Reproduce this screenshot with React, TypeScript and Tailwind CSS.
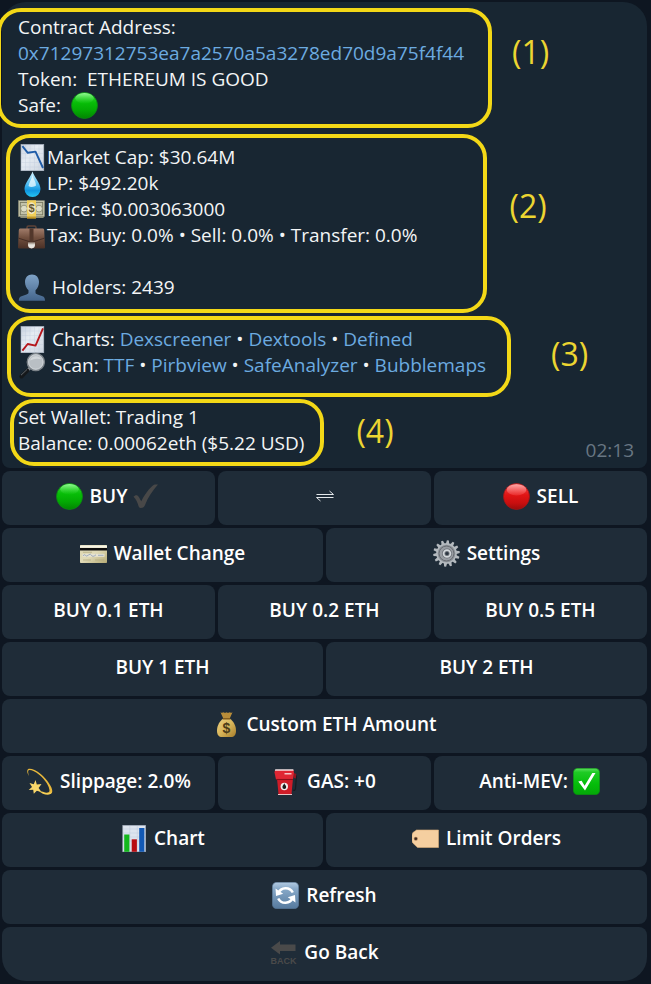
import type { ReactNode } from "react";

/* =============================================================
   Trading bot chat: token message + inline keyboard
   ============================================================= */

type IconProps = { children: ReactNode };

function Icon({ children }: IconProps) {
  return (
    <svg viewBox="0 0 27 27" className="mr-[2px] h-[27px] w-[27px] shrink-0" aria-hidden="true">
      {children}
    </svg>
  );
}

function GreenDot() {
  return (
    <Icon>
      <defs>
        <linearGradient id="green" x1="0" y1="0" x2="0" y2="1">
          <stop offset="0" stopColor="#3fd83f" />
          <stop offset="0.4" stopColor="#07bd07" />
          <stop offset="0.7" stopColor="#03a903" />
          <stop offset="1" stopColor="#028502" />
        </linearGradient>
        <linearGradient id="greenShine" x1="0" y1="0" x2="0" y2="1">
          <stop offset="0" stopColor="#9dff9d" stopOpacity="0.9" />
          <stop offset="1" stopColor="#2cd82c" stopOpacity="0.1" />
        </linearGradient>
      </defs>
      <circle cx="13.5" cy="13.5" r="13" fill="url(#green)" stroke="#0a8a12" strokeWidth="0.8" />
      <ellipse cx="13.5" cy="6.2" rx="9.2" ry="5.2" fill="url(#greenShine)" />
    </Icon>
  );
}

function RedDot() {
  return (
    <Icon>
      <defs>
        <linearGradient id="red" x1="0" y1="0" x2="0" y2="1">
          <stop offset="0" stopColor="#f05050" />
          <stop offset="0.45" stopColor="#e01414" />
          <stop offset="0.75" stopColor="#c90f0f" />
          <stop offset="1" stopColor="#9a0c0c" />
        </linearGradient>
        <linearGradient id="redShine" x1="0" y1="0" x2="0" y2="1">
          <stop offset="0" stopColor="#ffb3b3" stopOpacity="0.9" />
          <stop offset="1" stopColor="#ff6060" stopOpacity="0.3" />
        </linearGradient>
      </defs>
      <circle cx="13.5" cy="13.5" r="13" fill="url(#red)" stroke="#a31616" strokeWidth="0.8" />
      <ellipse cx="13.5" cy="6.8" rx="9.8" ry="5.6" fill="url(#redShine)" />
    </Icon>
  );
}

function ChartPaper({ children }: IconProps) {
  return (
    <Icon>
      <defs>
        <linearGradient id="paper" x1="0" y1="0" x2="1" y2="1">
          <stop offset="0" stopColor="#c9d2df" />
          <stop offset="0.4" stopColor="#e6ecf3" />
          <stop offset="1" stopColor="#cfd6e0" />
        </linearGradient>
      </defs>
      <rect x="3" y="0.4" width="22.8" height="26.4" fill="url(#paper)" stroke="#aab4c2" strokeWidth="0.6" />
      <path
        d="M7.500 .8v25.6M12 .8v25.6M16.500 .8v25.6M21 .8v25.6M3.300 5h22M3.300 9.500h22M3.300 14h22M3.300 18.500h22M3.300 23h22"
        stroke="#b9c6d8"
        strokeWidth="0.4"
        opacity="0.7"
      />
      {children}
    </Icon>
  );
}

function ChartDown() {
  return (
    <ChartPaper>
      <path d="M4.400 2.200L9.800 8.800L17.500 7.600L25 24" fill="none" stroke="#1f5ca8" strokeWidth="1.9" strokeLinejoin="round" />
    </ChartPaper>
  );
}

function ChartUp() {
  return (
    <ChartPaper>
      <path d="M4.400 24.600L9.700 18L17.500 19.600L25 2.400" fill="none" stroke="#b5161c" strokeWidth="1.9" strokeLinejoin="round" />
    </ChartPaper>
  );
}

function Drop() {
  return (
    <Icon>
      <defs>
        <linearGradient id="drop" x1="0" y1="0" x2="0" y2="1">
          <stop offset="0" stopColor="#d9f4ff" />
          <stop offset="0.45" stopColor="#59c0f2" />
          <stop offset="0.75" stopColor="#0f97e0" />
          <stop offset="1" stopColor="#27c6f2" />
        </linearGradient>
      </defs>
      <path d="M14.500 1.500C16 6.500 22.500 13 22.500 19a8 8 0 0 1-16 0C6.500 13 13 6.500 14.500 1.500z" fill="url(#drop)" />
      <path d="M14.500 5C14 9 11 12 10.500 16c2 1.500 6 1 7.500-.5C18 11.500 15.300 9 14.500 5z" fill="#f2fcff" opacity="0.75" />
    </Icon>
  );
}

function Banknotes() {
  return (
    <Icon>
      <path d="M2 19l.5 3h23l.7-3z" fill="#8f8f78" />
      <rect x="0.5" y="4.7" width="26" height="15.8" fill="#c4c4ab" stroke="#8b8b74" strokeWidth="0.6" />
      <rect x="2.3" y="6.4" width="22.4" height="12.4" fill="none" stroke="#77775f" strokeWidth="0.9" />
      <circle cx="6" cy="12.6" r="3.4" fill="#dcdcc6" stroke="#88886e" strokeWidth="0.8" />
      <circle cx="21" cy="12.6" r="3.4" fill="#dcdcc6" stroke="#88886e" strokeWidth="0.8" />
      <rect x="9" y="4.3" width="9" height="16.4" fill="#f1cf58" />
      <path d="M9 20.700h9v2H9z" fill="#c59a25" />
      <ellipse cx="13.5" cy="12.3" rx="4" ry="6" fill="#eee6c0" />
      <text x="13.5" y="16.3" textAnchor="middle" fontSize="11" fontWeight="700" fontFamily="Liberation Sans, sans-serif" fill="#66582f">
        $
      </text>
    </Icon>
  );
}

function Briefcase() {
  return (
    <Icon>
      <defs>
        <linearGradient id="case" x1="0" y1="0" x2="0" y2="1">
          <stop offset="0" stopColor="#a17c6a" />
          <stop offset="0.45" stopColor="#72503f" />
          <stop offset="1" stopColor="#4a3026" />
        </linearGradient>
      </defs>
      <path d="M9 7V5.500Q9 4 10.500 4h6Q18 4 18 5.500V7" fill="none" stroke="#5d4338" strokeWidth="1.5" />
      <path d="M2 6.500h23q1 0 1.200 1.500L27 25.500q0 1-1 1H1q-1 0-1-1L.8 8q.2-1.500 1.200-1.500z" fill="url(#case)" />
      <path d="M.6 16.200L11 19.500h5l10.400-3.300" fill="none" stroke="#412a22" strokeWidth="0.9" />
      <path d="M11.500 6.500h4v14h-4z" fill="#52372b" />
      <path d="M10 21h7v2q0 3-3.500 3.500Q10 26 10 23z" fill="#e9e5df" />
      <path d="M10 20.500h7v1.800h-7z" fill="#b5aaa0" />
    </Icon>
  );
}

function Person() {
  return (
    <Icon>
      <defs>
        <linearGradient id="person" x1="0" y1="0" x2="0" y2="1">
          <stop offset="0" stopColor="#7fa3c7" />
          <stop offset="1" stopColor="#44658c" />
        </linearGradient>
      </defs>
      <path
        d="M14 .5c4.300 0 7 3 7 7.500 0 3.500-1.500 6.500-3.500 8.200v2.300c0 1 .7 1.500 2 2l5 1.700c1.700.6 2.500 2 2.500 4.600H.8c0-2.600.9-4 2.700-4.600l5-1.700c1.300-.5 2-1 2-2v-2.300C8.500 14.500 7 11.500 7 8c0-4.500 2.700-7.500 7-7.500z"
        fill="url(#person)"
      />
    </Icon>
  );
}

function Magnifier() {
  return (
    <Icon>
      <path d="M12 16L9 19" stroke="#8a8f94" strokeWidth="3" />
      <path d="M9.300 18.700L3.500 24.500" stroke="#15181b" strokeWidth="4" strokeLinecap="round" />
      <path d="M9 17.500L3 23.200" stroke="#6a6f74" strokeWidth="0.9" />
      <circle cx="17.8" cy="10" r="8.6" fill="#abb2b8" stroke="#7c8389" strokeWidth="1.3" />
      <circle cx="17.8" cy="10" r="7.2" fill="#b9bfc4" stroke="#d8dcdf" strokeWidth="0.7" />
      <path d="M12 8.500a6.200 6.200 0 0 1 11.300-1.200Q17.500 5.500 12 8.500z" fill="#dde1e4" opacity="0.7" />
    </Icon>
  );
}

function HeavyCheck() {
  return (
    <Icon>
      <path
        d="M1.500 13.800C2.500 12.400 4.300 11.700 5.400 12.500c1.600 1.200 2.600 3.700 3.900 5.800C12.500 11.500 17.500 5 22 1.800c1.100-.5 2.900-.5 4-.2C20.500 7.500 16 14.500 12.800 22.500c-1 2-2.500 2.500-4.200 2.400-1 0-1.600-.7-2-1.700C5.500 19.700 4.200 16 1.500 13.800z"
        fill="#484848"
      />
    </Icon>
  );
}

function Swap() {
  return (
    <svg viewBox="0 0 18 12" className="h-3 w-[18px]" aria-hidden="true">
      <path d="M.5 4.500H17.500L13.500 1M17.500 7.500H.5L4.500 11" fill="none" stroke="#e4e8eb" strokeWidth="1" />
    </svg>
  );
}

function Card() {
  return (
    <Icon>
      <defs>
        <linearGradient id="card" x1="0" y1="0" x2="1" y2="1">
          <stop offset="0" stopColor="#ddd7b4" />
          <stop offset="0.5" stopColor="#e0dab6" />
          <stop offset="1" stopColor="#b5aa74" />
        </linearGradient>
      </defs>
      <rect x="0" y="5" width="27" height="18" rx="0.8" fill="url(#card)" />
      <path d="M0 5.600h27v2H0z" fill="#f6f4e6" />
      <path d="M0 8h27v2.500H0z" fill="#0d0d0d" />
      <path d="M2.500 13.800h22v3h-22z" fill="#e6e3d2" />
      <path d="M3 15.800q1.500-2 2.500-.4t3-.4 3 .3 4.500-.5M18 15.300h5.500" fill="none" stroke="#7f94b4" strokeWidth="0.7" />
      <path d="M3 12.300h9M3 20h8M15 20h9" stroke="#b0a77c" strokeWidth="0.7" />
    </Icon>
  );
}

function Gear() {
  const teeth = Array.from({ length: 14 }, (_, i) => (i * 360) / 14 + 6);
  return (
    <Icon>
      {teeth.map((deg) => (
        <path key={deg} d="M11.700 4.500L12.500.2h2l.8 4.300z" fill="#b4babf" transform={`rotate(${deg} 13.5 13.5)`} />
      ))}
      <circle cx="13.5" cy="13.5" r="9.6" fill="#8a9096" stroke="#b3b9be" strokeWidth="1.6" />
      <circle cx="13.5" cy="13.5" r="7.4" fill="#979ca2" stroke="#656a71" strokeWidth="0.9" />
      <circle cx="14" cy="13.5" r="5" fill="#6b7077" />
      <circle cx="14" cy="13.5" r="3.4" fill="#6b7077" stroke="#d3d8dc" strokeWidth="1.8" />
      <circle cx="14" cy="13.5" r="1.6" fill="#2a3540" />
    </Icon>
  );
}

function MoneyBag() {
  return (
    <Icon>
      <defs>
        <linearGradient id="bag" x1="0" y1="0" x2="1" y2="1">
          <stop offset="0" stopColor="#ecd182" />
          <stop offset="0.5" stopColor="#d9b65a" />
          <stop offset="1" stopColor="#a57c2a" />
        </linearGradient>
      </defs>
      <path d="M7.500 1.200q1.500 1 3 .1 1.500 1 3 0 1.500 1 3 0 1.400.9 3-.1L16.500 8h-6z" fill="#b98d39" />
      <path d="M10.300 7.500h6.400c3.500 2.500 6.300 7 6.300 12 0 4.800-2 6.500-5 6.500H9c-3 0-5-1.700-5-6.500 0-5 2.800-9.500 6.300-12z" fill="url(#bag)" />
      <path d="M9.800 7.800h7.400" stroke="#7d5518" strokeWidth="1.4" />
      <text x="13.5" y="22.3" textAnchor="middle" fontSize="14" fontWeight="700" fontFamily="Liberation Sans, sans-serif" fill="#4c3c18">
        $
      </text>
    </Icon>
  );
}

function Dizzy() {
  return (
    <Icon>
      <path
        d="M3 8C1.500 5.500 .5 2.500 2 1.200 4 0 9.500 1.800 15 6.200c6 5 11.500 13 11.300 17-.2 3.800-4.500 3.300-9.300 1 3.500 1 6.200.8 6.500-1.400C23.800 18.700 19 11.500 13.500 7 8.700 3 4 1.300 2.600 2.300 1.600 3.200 2.300 5.500 3 8z"
        fill="#e8b83c"
      />
      <path d="M9.500 12l1.300 4.600 4.700-.6-2.900 4 2.900 4-4.700-1.200-3 3-.6-4L2.700 22l3.300-3-2.500-4 4.300 1.200z" fill="#f9d76a" />
      <path d="M12.500 23l4.500.7c3 1.700 6.800 2 8.800-.2-.6 4-4.800 3.800-9 2.300z" fill="#f6cf55" />
    </Icon>
  );
}

function GasPump() {
  return (
    <Icon>
      <path d="M20 6q3.500 0 3.300 3.500l-.8 11q-.3 2.500-2.500 1.500" fill="none" stroke="#171b20" strokeWidth="1.2" />
      <path d="M20 4.500l3.300 1.500-.5 4.500-1.800-.5z" fill="#8e1520" />
      <path d="M4 10.500h16L18.500 26h-13z" fill="#cf1c28" />
      <path d="M2 2h18.500l.5 2.500-1 7H3l-1.500-7z" fill="#df2633" />
      <path d="M2.300 1.300h18l.3 1.500H1.900z" fill="#f2dfe0" />
      <path d="M11.500 5h7v1.500h-7z" fill="#f4c4c7" />
      <path d="M3 11.500h17" stroke="#8b0f19" strokeWidth="1.1" />
      <path d="M5 26h14v1H5z" fill="#e8c4c6" />
      <circle cx="11.3" cy="18.5" r="3.7" fill="#f1eded" />
      <path d="M11.300 15.300c.8 1.700 1.900 2.500 1.900 3.800a1.900 1.900 0 0 1-3.800 0c0-1.300 1.100-2.100 1.900-3.800z" fill="#1b1b1b" />
    </Icon>
  );
}

function CheckBox() {
  return (
    <Icon>
      <defs>
        <linearGradient id="box" x1="0" y1="0" x2="0" y2="1">
          <stop offset="0" stopColor="#5fe05f" />
          <stop offset="0.15" stopColor="#1fcb25" />
          <stop offset="0.6" stopColor="#05bd0a" />
          <stop offset="1" stopColor="#04a808" />
        </linearGradient>
      </defs>
      <rect x="0.3" y="0.3" width="26.4" height="26.4" rx="4.5" fill="url(#box)" stroke="#0a8f10" strokeWidth="0.6" />
      <path d="M5.300 13.500l3.300-.8 3 5L19.300 5h3.200L12 22.500z" fill="#fff" />
    </Icon>
  );
}

function BarChart() {
  return (
    <Icon>
      <rect x="2.8" y="0.4" width="22.8" height="26.4" fill="#dde4ee" stroke="#aab4c2" strokeWidth="0.6" />
      <path d="M3 4h22M3 8h22M3 12h22M3 16h22M9.800.8v26M17.300.8v26" stroke="#b9c6d8" strokeWidth="0.4" />
      <path d="M4.200 9.500h5.200v17.300H4.200z" fill="#14b81d" />
      <path d="M11.700 14.300h5.200v12.500h-5.200z" fill="#b80d12" />
      <path d="M19.200 3h5.200v23.800h-5.200z" fill="#1259b5" />
    </Icon>
  );
}

function Tag() {
  return (
    <Icon>
      <path d="M4.500 5H26.500V22.500H5.500L.8 18Q0 17 0 16V10Q0 8.500 1 7.500z" fill="#f5cfa0" stroke="#dcae79" strokeWidth="0.6" />
      <circle cx="3.8" cy="13.7" r="2" fill="#a97d57" />
      <circle cx="3.8" cy="13.7" r="1.3" fill="#3b2a20" />
    </Icon>
  );
}

function RefreshBox() {
  return (
    <Icon>
      <defs>
        <linearGradient id="refresh" x1="0" y1="0" x2="0" y2="1">
          <stop offset="0" stopColor="#b3cbe2" />
          <stop offset="0.25" stopColor="#88a9c8" />
          <stop offset="1" stopColor="#567a9e" />
        </linearGradient>
      </defs>
      <rect x="0.3" y="0.3" width="26.4" height="26.4" rx="4.5" fill="url(#refresh)" stroke="#587693" strokeWidth="0.6" />
      <path d="M6.300 11.200A8 8 0 0 1 20.800 10.500" fill="none" stroke="#fff" strokeWidth="2.5" />
      <path d="M20.700 15.800A8 8 0 0 1 6.200 16.500" fill="none" stroke="#fff" strokeWidth="2.5" />
      <path d="M3.500 6.500L4 14l7.200-2.200z" fill="#fff" />
      <path d="M23.500 20.500L23 13l-7.200 2.200z" fill="#fff" />
    </Icon>
  );
}

function BackArrow() {
  return (
    <Icon>
      <path d="M1 8.700L10 2v3.500h15.500v6.500H10v3.500z" fill="#4a4a4a" />
      <text
        x="13.5"
        y="25"
        textAnchor="middle"
        fontSize="9"
        fontWeight="700"
        fontFamily="Liberation Sans, sans-serif"
        fill="#4a4a4a"
      >
        BACK
      </text>
    </Icon>
  );
}

/* One line of message text */
function Line({ children }: { children?: ReactNode }) {
  return <div className="flex h-[26px] items-center whitespace-pre">{children}</div>;
}

function LinkList({ items }: { items: string[] }) {
  return (
    <span>
      {items.map((item, i) => (
        <span key={item}>
          {i > 0 && " • "}
          <a href={`#${item.toLowerCase()}`} className="text-[#6cabe0] hover:underline">
            {item}
          </a>
        </span>
      ))}
    </span>
  );
}

const frame = "rounded-[24px] border-4 border-[#f3d817]";
const note = "text-[32px] leading-8 text-[#ecd531]";

function Message() {
  return (
    <div className="rounded-t-[24px] rounded-b-lg bg-[#182632] pt-[6px] pb-[2px] text-[#f3f5f6]">
      {/* Contract */}
      <div className="mb-[6px] flex items-start">
        <section className={`-ml-[5px] pt-[2px] pr-6 pb-[6px] pl-[17px] ${frame}`}>
          <Line>Contract Address:</Line>
          <Line>
            <a href="#contract" className="text-[#6cabe0]">
              0x71297312753ea7a2570a5a3278ed70d9a75f4f44
            </a>
          </Line>
          <Line>{"Token:  ETHEREUM IS GOOD"}</Line>
          <Line>
            {"Safe:  "}
            <GreenDot />
          </Line>
        </section>
        <span className={`mt-7 ml-5 ${note}`}>(1)</span>
      </div>

      {/* Market stats */}
      <div className="mb-[3px] flex items-start">
        <section className={`ml-1 pt-[6px] pr-[66px] pb-[9px] pl-2 ${frame}`}>
          <Line>
            <ChartDown />
            Market Cap: $30.64M
          </Line>
          <Line>
            <Drop />
            LP: $492.20k
          </Line>
          <Line>
            <Banknotes />
            Price: $0.003063000
          </Line>
          <Line>
            <Briefcase />
            Tax: Buy: 0.0% • Sell: 0.0% • Transfer: 0.0%
          </Line>
          <Line />
          <Line>
            <Person />
            {" Holders: 2439"}
          </Line>
        </section>
        <span className={`mt-14 ml-[22px] ${note}`}>(2)</span>
      </div>

      {/* External links */}
      <div className="mb-[2px] flex items-start">
        <section className={`ml-[5px] pt-[6px] pr-[21px] pb-[15px] pl-[7px] ${frame}`}>
          <Line>
            <ChartUp />
            {" Charts: "}
            <LinkList items={["Dexscreener", "Dextools", "Defined"]} />
          </Line>
          <Line>
            <Magnifier />
            {" Scan: "}
            <LinkList items={["TTF", "Pirbview", "SafeAnalyzer", "Bubblemaps"]} />
          </Line>
        </section>
        <span className={`mt-[22px] ml-10 ${note}`}>(3)</span>
      </div>

      {/* Wallet */}
      <div className="flex items-start">
        <section className={`ml-2 pt-px pr-4 pb-[6px] pl-1 ${frame}`}>
          <Line>Set Wallet: Trading 1</Line>
          <Line>Balance: 0.00062eth ($5.22 USD)</Line>
        </section>
        <span className={`mt-4 ml-8 ${note}`}>(4)</span>
        <time className="mr-[13px] mb-[3px] ml-auto self-end text-[#687683]">02:13</time>
      </div>
    </div>
  );
}

function Key({ children, label }: { children: ReactNode; label?: string }) {
  return (
    <button
      type="button"
      aria-label={label}
      className="flex h-[54px] min-w-0 flex-1 cursor-pointer items-center justify-center rounded-lg bg-[#1f2c38] pb-1 font-semibold whitespace-pre text-white hover:bg-[#263442]"
    >
      {children}
    </button>
  );
}

function KeyRow({ children }: { children: ReactNode }) {
  return <div className="flex gap-[3px] last:*:rounded-b-[24px]">{children}</div>;
}

export default function App() {
  return (
    <main className="flex min-h-screen flex-col gap-[3px] overflow-hidden bg-[#0e1621] pt-[2px] pr-1 pb-[3px] pl-[2px] font-['Open_Sans','Noto_Sans',sans-serif] text-[19px] leading-[26px]">
      <Message />

      <KeyRow>
        <Key>
          <GreenDot />
          {" BUY "}
          <HeavyCheck />
        </Key>
        <Key label="Swap">
          <Swap />
        </Key>
        <Key>
          <RedDot />
          {" SELL"}
        </Key>
      </KeyRow>
      <KeyRow>
        <Key>
          <Card />
          {" Wallet Change"}
        </Key>
        <Key>
          <Gear />
          {" Settings"}
        </Key>
      </KeyRow>
      <KeyRow>
        <Key>BUY 0.1 ETH</Key>
        <Key>BUY 0.2 ETH</Key>
        <Key>BUY 0.5 ETH</Key>
      </KeyRow>
      <KeyRow>
        <Key>BUY 1 ETH</Key>
        <Key>BUY 2 ETH</Key>
      </KeyRow>
      <KeyRow>
        <Key>
          <MoneyBag />
          {" Custom ETH Amount"}
        </Key>
      </KeyRow>
      <KeyRow>
        <Key>
          <Dizzy />
          {" Slippage: 2.0%"}
        </Key>
        <Key>
          <GasPump />
          {" GAS: +0"}
        </Key>
        <Key>
          {"Anti-MEV: "}
          <CheckBox />
        </Key>
      </KeyRow>
      <KeyRow>
        <Key>
          <BarChart />
          {" Chart"}
        </Key>
        <Key>
          <Tag />
          {" Limit Orders"}
        </Key>
      </KeyRow>
      <KeyRow>
        <Key>
          <RefreshBox />
          {" Refresh"}
        </Key>
      </KeyRow>
      <KeyRow>
        <Key>
          <BackArrow />
          {" Go Back"}
        </Key>
      </KeyRow>
    </main>
  );
}
